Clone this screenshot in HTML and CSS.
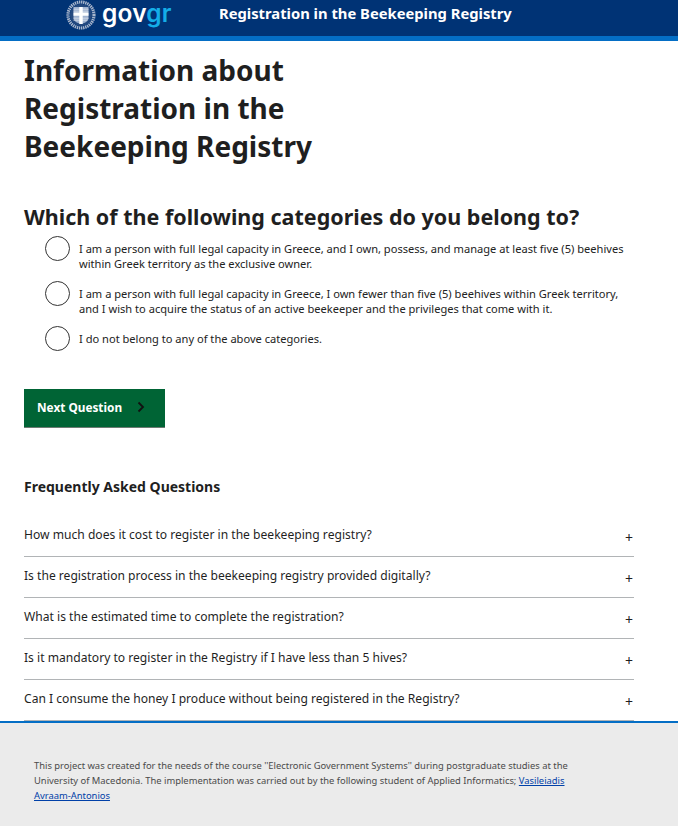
FILE: index.html
```html
<!DOCTYPE html>
<html lang="en">
<head>
<meta charset="utf-8">
<title>Registration in the Beekeeping Registry</title>
<link rel="stylesheet" href="styles.css">
</head>
<body>
<header class="site-header">
  <div class="brand">
    <svg class="emblem" width="30" height="30" viewBox="0 0 30 30" aria-hidden="true">
      <circle cx="15" cy="15" r="13" fill="none" stroke="#a9b6cc" stroke-width="3.200" stroke-dasharray="1.400 .7"/>
      <circle cx="15" cy="15" r="11" fill="#24497f"/>
      <path d="M7.500 7h15v11c0 2.800-3.200 5-7.500 6-4.300-1-7.500-3.200-7.500-6z" fill="#9fb2cf"/>
      <path d="M7.500 9.200h15M7.500 11.200h15M7.500 18.200h15M7.500 20.200h14" stroke="#d9e1ec" stroke-width=".8"/>
      <path d="M13.300 7h3.400v5.400h5.800v3.400h-5.800V24h-3.400v-8.200H7.500v-3.400h5.800z" fill="#fff"/>
    </svg>
    <span class="wordmark">gov<span class="wordmark-gr">gr</span></span>
  </div>
  <div class="site-title">Registration in the Beekeeping Registry</div>
</header>
<main class="content">
  <h1 class="page-title">Information about Registration in the Beekeeping Registry</h1>
  <h2 class="question">Which of the following categories do you belong to?</h2>
  <div class="options">
    <label class="option"><span class="radio"></span><span class="option-text">I am a person with full legal capacity in Greece, and I own, possess, and manage at least five (5) beehives within Greek territory as the exclusive owner.</span></label>
    <label class="option"><span class="radio"></span><span class="option-text">I am a person with full legal capacity in Greece, I own fewer than five (5) beehives within Greek territory, and I wish to acquire the status of an active beekeeper and the privileges that come with it.</span></label>
    <label class="option"><span class="radio"></span><span class="option-text">I do not belong to any of the above categories.</span></label>
  </div>
  <button class="next-btn" type="button">Next Question
    <svg width="10" height="12" viewBox="0 0 10 12" aria-hidden="true"><path d="M2.500 1.500 7 6l-4.500 4.500" fill="none" stroke="#111" stroke-width="1.800"/></svg>
  </button>
  <h3 class="faq-title">Frequently Asked Questions</h3>
  <div class="faq">
    <div class="faq-row"><span>How much does it cost to register in the beekeeping registry?</span><span class="plus">+</span></div>
    <div class="faq-row"><span>Is the registration process in the beekeeping registry provided digitally?</span><span class="plus">+</span></div>
    <div class="faq-row"><span>What is the estimated time to complete the registration?</span><span class="plus">+</span></div>
    <div class="faq-row"><span>Is it mandatory to register in the Registry if I have less than 5 hives?</span><span class="plus">+</span></div>
    <div class="faq-row"><span>Can I consume the honey I produce without being registered in the Registry?</span><span class="plus">+</span></div>
  </div>
</main>
<footer class="site-footer">
  <p class="footer-text">This project was created for the needs of the course ''Electronic Government Systems'' during postgraduate studies at the University of Macedonia. The implementation was carried out by the following student of Applied Informatics; <a href="#">Vasileiadis Avraam-Antonios</a></p>
</footer>
</body>
</html>
```
FILE: styles.css
```css
* { box-sizing: border-box; }
html, body { margin: 0; padding: 0; }
body {
  width: 678px;
  height: 826px;
  overflow: hidden;
  background: #fff;
  color: #1f1f1f;
  font-family: "Noto Sans", "Open Sans", sans-serif;
  display: flex;
  flex-direction: column;
}
.site-header {
  height: 41px;
  flex: none;
  background: #003375;
  border-bottom: 5px solid #046ec5;
  display: flex;
  align-items: flex-start;
  padding-left: 66px;
}
.brand { display: flex; align-items: flex-start; gap: 6px; width: 153px; flex: none; }
.emblem { flex: none; }
.wordmark {
  font-family: "Inter", sans-serif;
  font-size: 24.500px;
  line-height: 30px;
  margin-top: -2px;
  font-weight: 600;
  color: #fff;
  letter-spacing: 0.2px;
}
.wordmark-gr { color: #14aee8; }
.site-title { color: #fff; font-size: 14.750px; font-weight: 700; line-height: 27px; white-space: nowrap; }
.content { flex: 1; min-height: 0; padding: 10px 44px 0 24px; }
.page-title { margin: 0; width: 310px; font-size: 28px; line-height: 38px; font-weight: 700; }
.question { margin: 37px 0 0; font-size: 21.500px; line-height: 30px; font-weight: 700; white-space: nowrap; }
.options { margin: 3px 0 0 21px; display: flex; flex-direction: column; gap: 9px; }
.option { display: flex; align-items: flex-start; gap: 9px; }
.radio { flex: none; width: 25px; height: 25px; border: 1.500px solid #333; border-radius: 50%; margin-top: 1px; }
.option-text { font-size: 11.100px; line-height: 15px; padding-top: 6px; color: #222; }
.next-btn {
  display: flex;
  align-items: center;
  gap: 14px;
  margin-top: 38px;
  width: 141px;
  height: 39px;
  padding: 0 0 2px 13px;
  background: #006435;
  border: 0;
  border-bottom: 1px solid #6d7a72;
  color: #fff;
  font-family: inherit;
  font-size: 11.800px;
  font-weight: 700;
  white-space: nowrap;
}
.faq-title { margin: 49px 0 0; font-size: 14px; line-height: 20px; font-weight: 700; }
.faq { margin-top: 19px; width: 610px; }
.faq-row {
  height: 41px;
  border-bottom: 1px solid #b1b4b6;
  display: flex;
  justify-content: space-between;
  align-items: flex-start;
  font-size: 12.100px;
  line-height: 20px;
  padding-top: 9px;
  color: #1f1f1f;
}
.plus { font-size: 14px; line-height: 20px; padding: 3px 1px 0 0; }
.site-footer {
  height: 105px;
  flex: none;
  background: #ebebeb;
  border-top: 2px solid #046ec5;
  padding: 35px 90px 0 34px;
}
.footer-text { margin: 0; font-size: 9.400px; line-height: 15px; color: #4a4a4a; }
.footer-text a { color: #0040a8; text-decoration: underline; }
```
